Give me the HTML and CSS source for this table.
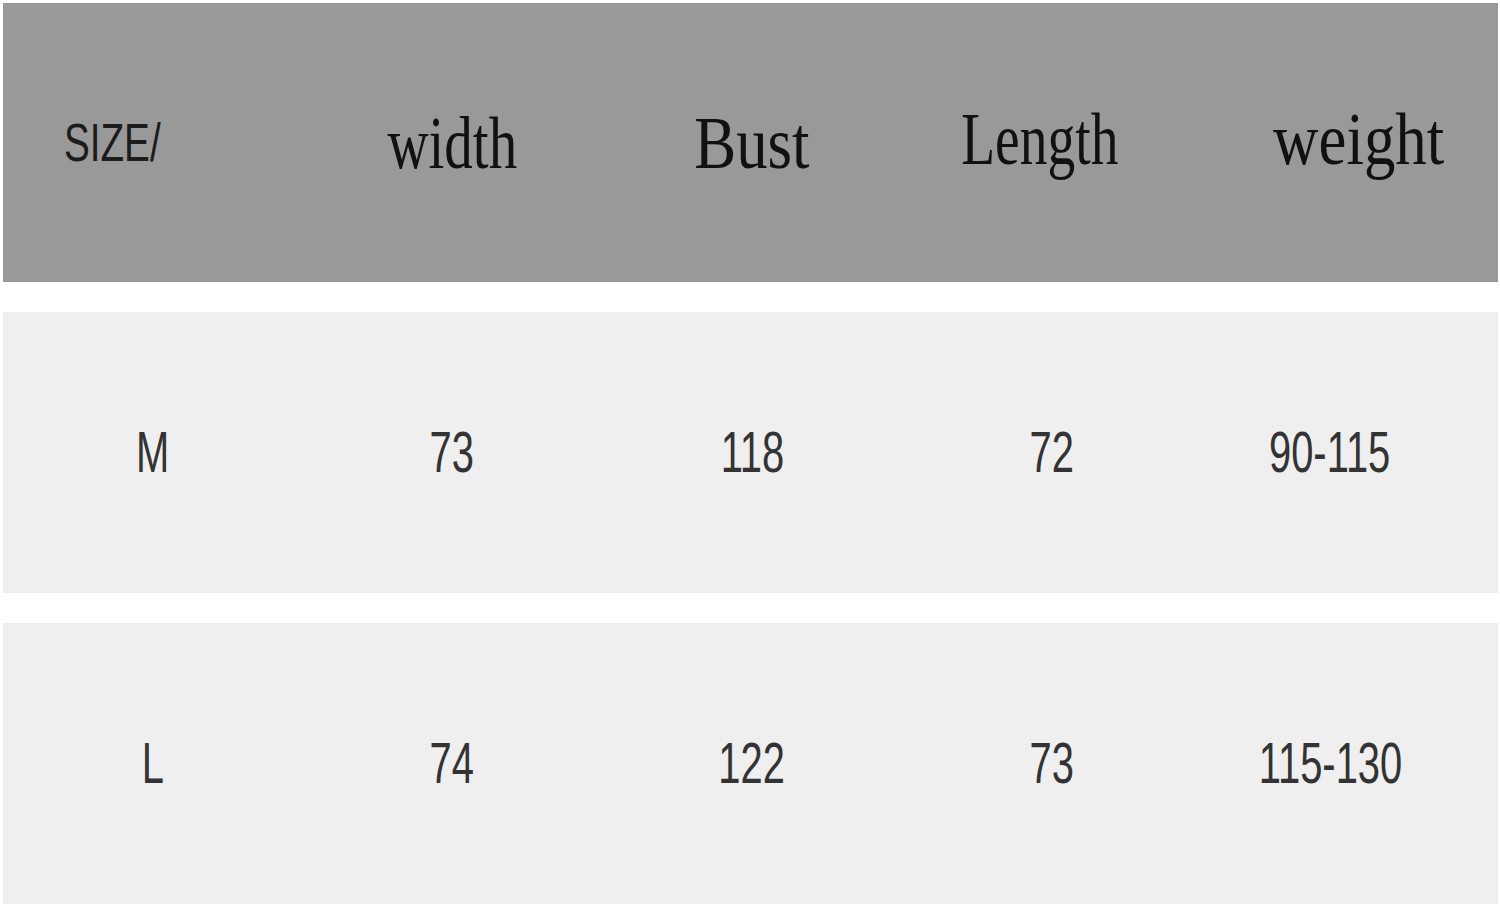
FILE: index.html
```html
<!DOCTYPE html>
<html>
<head>
<meta charset="utf-8">
<link rel="stylesheet" href="styles.css">
</head>
<body>
<div class="sheet">
  <div class="row head">
    <div class="cell c-size"><span class="txt sans-h">SIZE/</span></div>
    <div class="cell"><span class="txt serif tight">width</span></div>
    <div class="cell"><span class="txt serif wide">Bust</span></div>
    <div class="cell c-len"><span class="txt serif narrow">Length</span></div>
    <div class="cell c-wt"><span class="txt serif wide">weight</span></div>
  </div>
  <div class="row body">
    <div class="cell"><span class="txt sans">M</span></div>
    <div class="cell"><span class="txt sans">73</span></div>
    <div class="cell"><span class="txt sans">118</span></div>
    <div class="cell"><span class="txt sans">72</span></div>
    <div class="cell c-last"><span class="txt sans">90-115</span></div>
  </div>
  <div class="row body">
    <div class="cell"><span class="txt sans">L</span></div>
    <div class="cell"><span class="txt sans">74</span></div>
    <div class="cell"><span class="txt sans">122</span></div>
    <div class="cell"><span class="txt sans">73</span></div>
    <div class="cell c-last"><span class="txt sans">115-130</span></div>
  </div>
</div>
</body>
</html>
```

FILE: styles.css
```css
html, body {
  margin: 0;
  padding: 0;
  background: #ffffff;
}
.sheet {
  width: 1500px;
  height: 907px;
  padding-top: 3px;
  box-sizing: border-box;
  display: flex;
  flex-direction: column;
  gap: 30px;
}
.row {
  margin-left: 3px;
  width: 1495px;
  display: grid;
  grid-template-columns: 299px 300px 300px 300px 296px;
  align-items: center;
}
.head {
  height: 279px;
  background: #999999;
}
.body {
  height: 281px;
  background: #efefef;
}
.cell {
  display: flex;
  justify-content: center;
  align-items: center;
}
.c-size { padding-right: 80px; }
.c-len { padding-right: 24px; padding-bottom: 8px; }
.c-wt { padding-left: 18px; padding-bottom: 8px; }
.c-last { padding-right: 40px; }
.txt {
  display: inline-block;
  line-height: 1;
  white-space: nowrap;
}
.serif {
  font-family: "Liberation Serif", "Times New Roman", serif;
  font-size: 74px;
  color: #111111;
  transform: scaleX(0.8);
}
.serif.tight { transform: scaleX(0.77); }
.serif.narrow { transform: scaleX(0.75); }
.serif.wide { transform: scaleX(0.85); }
.sans-h {
  font-family: "Liberation Sans", Arial, sans-serif;
  font-size: 53px;
  color: #1c1c1c;
  transform: scaleX(0.73);
}
.sans {
  font-family: "Liberation Sans", Arial, sans-serif;
  font-size: 57px;
  color: #333333;
  transform: scaleX(0.7);
}
```
